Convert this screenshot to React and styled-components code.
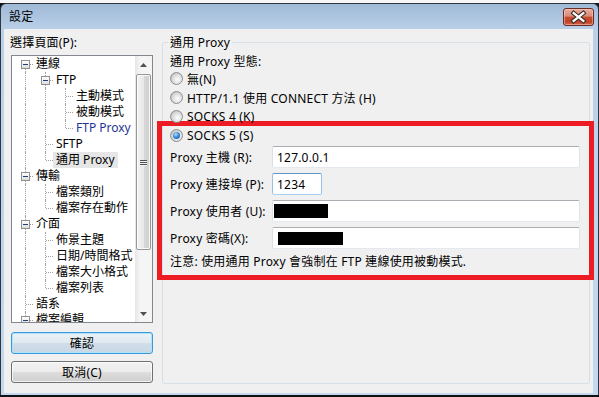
import styled, { createGlobalStyle } from 'styled-components';

const GlobalStyle = createGlobalStyle`
  html, body {
    margin: 0;
    padding: 0;
  }
  body {
    background: #0e1216;
    font-family: "Noto Sans", "Noto Sans CJK TC", sans-serif;
    font-size: 12px;
    letter-spacing: 0.2px;
    color: #000;
    overflow: hidden;
  }
`;

const TREE = [
  { guides: [], node: 'F', open: true, label: '連線' },
  { guides: ['I'], node: 'T', open: true, label: 'FTP' },
  { guides: ['I', 'I'], node: 'T', label: '主動模式' },
  { guides: ['I', 'I'], node: 'T', label: '被動模式' },
  { guides: ['I', 'I'], node: 'L', label: 'FTP Proxy', hot: true },
  { guides: ['I'], node: 'T', label: 'SFTP' },
  { guides: ['I'], node: 'L', label: '通用 Proxy', selected: true },
  { guides: [], node: 'T', open: true, label: '傳輸' },
  { guides: ['I'], node: 'T', label: '檔案類別' },
  { guides: ['I'], node: 'L', label: '檔案存在動作' },
  { guides: [], node: 'T', open: true, label: '介面' },
  { guides: ['I'], node: 'T', label: '佈景主題' },
  { guides: ['I'], node: 'T', label: '日期/時間格式' },
  { guides: ['I'], node: 'T', label: '檔案大小格式' },
  { guides: ['I'], node: 'L', label: '檔案列表' },
  { guides: [], node: 'T', label: '語系' },
  { guides: [], node: 'T', open: true, label: '檔案編輯' },
];

const PROXY_TYPES = [
  { label: '無(N)' },
  { label: 'HTTP/1.1 使用 CONNECT 方法 (H)' },
  { label: 'SOCKS 4 (K)' },
];

function App() {
  return (
    <>
      <GlobalStyle />
      <Screen>
        <Backdrop />
        <Window>
          <TitleBar>
            <Caption>設定</Caption>
            <CloseButton aria-label="close">
              <svg width="30" height="16" viewBox="0 0 30 16">
                <path d="M10 4 L20 12 M20 4 L10 12" stroke="#3b2a28" strokeWidth="4.6" strokeLinecap="square" fill="none" />
                <path d="M10 4 L20 12 M20 4 L10 12" stroke="#ffffff" strokeWidth="2.4" strokeLinecap="square" fill="none" />
              </svg>
            </CloseButton>
          </TitleBar>

          <Client>
            <LeftPane>
              <PaneLabel>選擇頁面(P):</PaneLabel>
              <TreeBox>
                <TreeList>
                  {TREE.map((item) => (
                    <TreeRow key={item.label}>
                      {item.guides.map((g, i) => (
                        <Guide key={i} $kind={g} />
                      ))}
                      <Guide $kind={item.node}>
                        {item.open && <Expander />}
                      </Guide>
                      <NodeLabel $selected={item.selected} $hot={item.hot}>
                        {item.label}
                      </NodeLabel>
                    </TreeRow>
                  ))}
                </TreeList>
                <ScrollBar>
                  <ArrowButton>
                    <svg width="7" height="4" viewBox="0 0 7 4">
                      <polygon points="3.5,0 7,4 0,4" fill="#505050" />
                    </svg>
                  </ArrowButton>
                  <Track>
                    <Thumb>
                      <Grip />
                      <Grip />
                      <Grip />
                    </Thumb>
                  </Track>
                  <ArrowButton>
                    <svg width="7" height="4" viewBox="0 0 7 4">
                      <polygon points="0,0 7,0 3.5,4" fill="#505050" />
                    </svg>
                  </ArrowButton>
                </ScrollBar>
              </TreeBox>
              <PushButton $default>確認</PushButton>
              <PushButton>取消(C)</PushButton>
            </LeftPane>

            <RightPane>
              <Group>
                <Legend>通用 Proxy</Legend>
                <TypeLabel>通用 Proxy 型態:</TypeLabel>
                {PROXY_TYPES.map((t) => (
                  <RadioRow key={t.label}>
                    <RadioDot />
                    <span>{t.label}</span>
                  </RadioRow>
                ))}
                <Highlight>
                  <RadioRow>
                    <RadioDot $checked />
                    <span>SOCKS 5 (S)</span>
                  </RadioRow>
                  <Fields>
                    <FieldRow>
                      <FieldLabel>Proxy 主機 (R):</FieldLabel>
                      <TextBox>127.0.0.1</TextBox>
                    </FieldRow>
                    <FieldRow>
                      <FieldLabel>Proxy 連接埠 (P):</FieldLabel>
                      <TextBox $width="50px" $focused>1234</TextBox>
                    </FieldRow>
                    <FieldRow>
                      <FieldLabel>Proxy 使用者 (U):</FieldLabel>
                      <TextBox $pad="1px">
                        <Redacted $w="54px" $h="14px" />
                      </TextBox>
                    </FieldRow>
                    <FieldRow>
                      <FieldLabel>Proxy 密碼(X):</FieldLabel>
                      <TextBox $pad="5px">
                        <Redacted $w="65px" $h="13px" />
                      </TextBox>
                    </FieldRow>
                  </Fields>
                  <Note>注意: 使用通用 Proxy 會強制在 FTP 連線使用被動模式.</Note>
                </Highlight>
              </Group>
            </RightPane>
          </Client>
        </Window>
      </Screen>
    </>
  );
}

export default App;

const Screen = styled.div`
  width: 599px;
  height: 397px;
  overflow: hidden;
  display: flex;
  flex-direction: column;
`;

const Backdrop = styled.div`
  flex: none;
  height: 3px;
  background: #f6f6f6;
`;

const Window = styled.div`
  flex: none;
  height: 392px;
  box-sizing: border-box;
  display: flex;
  flex-direction: column;
  border: 1px solid #2c3540;
  border-bottom: none;
  border-radius: 6px 6px 0 0;
  background: linear-gradient(#9fb9d6, #bad0e9 26px, #c4d8ee);
  padding: 0 5px 2px 3px;
`;

const TitleBar = styled.div`
  flex: none;
  height: 25px;
  display: flex;
  align-items: center;
  justify-content: space-between;
`;

const Caption = styled.span`
  padding-left: 5px;
  line-height: 15px;
`;

const CloseButton = styled.div`
  width: 31px;
  height: 18px;
  margin-right: -1px;
  box-sizing: border-box;
  border: 1px solid #6b2b22;
  border-radius: 3px;
  display: flex;
  align-items: center;
  justify-content: center;
  background: linear-gradient(#e8ab9c 0%, #dc8c78 45%, #c5502f 50%, #c04229 80%, #d2684c 100%);
  box-shadow: inset 0 0 0 1px rgba(255, 220, 210, 0.45);
`;

const Client = styled.div`
  flex: 1;
  display: flex;
  gap: 9px;
  padding: 6px 3px 0 7px;
  background: #f0f0f0;
`;

const LeftPane = styled.div`
  width: 142px;
  flex: none;
  display: flex;
  flex-direction: column;
`;

const PaneLabel = styled.div`
  line-height: 15px;
  margin-left: -1px;
`;

const TreeBox = styled.div`
  margin-top: 5px;
  height: 268px;
  box-sizing: border-box;
  border: 1px solid #828790;
  background: #fff;
  display: flex;
`;

const TreeList = styled.div`
  flex: 1;
  overflow: hidden;
  padding-left: 3px;
  letter-spacing: 0;
`;

const TreeRow = styled.div`
  height: 16px;
  flex: none;
  display: flex;
  white-space: nowrap;
`;

const Guide = styled.span`
  position: relative;
  flex: none;
  width: 20px;
  height: 16px;

  &::before {
    content: '';
    position: absolute;
    left: 10px;
    top: ${(p) => (p.$kind === 'F' ? '8px' : '0')};
    bottom: ${(p) => (p.$kind === 'L' ? '8px' : '0')};
    border-left: 1px dotted #a0a0a0;
  }

  &::after {
    content: '';
    display: ${(p) => (p.$kind === 'I' ? 'none' : 'block')};
    position: absolute;
    left: 11px;
    top: 8px;
    width: 7px;
    border-top: 1px dotted #a0a0a0;
  }
`;

const Expander = styled.span`
  position: absolute;
  z-index: 1;
  left: 6px;
  top: 4px;
  width: 9px;
  height: 9px;
  box-sizing: border-box;
  border: 1px solid #919191;
  background: linear-gradient(#ffffff, #dcdcdc);

  &::after {
    content: '';
    position: absolute;
    left: 1px;
    top: 3px;
    width: 5px;
    height: 1px;
    background: #1e3f78;
  }
`;

const NodeLabel = styled.span`
  margin-left: -2px;
  padding: 0 3px;
  line-height: 16px;
  color: ${(p) => (p.$hot ? '#1f3596' : '#000')};
  background: ${(p) => (p.$selected ? '#e6e6e6' : 'transparent')};
`;

const ScrollBar = styled.div`
  width: 17px;
  flex: none;
  display: flex;
  flex-direction: column;
  background: linear-gradient(90deg, #e6e6e6, #f5f5f5 30%, #f5f5f5);
`;

const ArrowButton = styled.div`
  height: 17px;
  flex: none;
  display: flex;
  align-items: center;
  justify-content: center;
`;

const Track = styled.div`
  flex: 1;
  padding: 1px 1px 0 1px;
`;

const Thumb = styled.div`
  height: 176px;
  box-sizing: border-box;
  border: 1px solid #979797;
  border-radius: 2px;
  background: linear-gradient(90deg, #f4f4f4, #e8e8e8 50%, #d7d7d7 55%, #cfcfcf);
  box-shadow: inset 0 0 0 1px rgba(255, 255, 255, 0.8);
  display: flex;
  flex-direction: column;
  align-items: center;
  justify-content: center;
  gap: 1px;
`;

const Grip = styled.span`
  width: 7px;
  height: 1px;
  background: #505050;
  box-shadow: 0 1px 0 #f0f0f0;
`;

const PushButton = styled.div`
  height: 22px;
  box-sizing: border-box;
  margin-top: ${(p) => (p.$default ? '9px' : '7px')};
  border-radius: 3px;
  border: 1px solid ${(p) => (p.$default ? '#3a9ad9' : '#707070')};
  background: ${(p) =>
    p.$default
      ? 'linear-gradient(#ebf2f7, #e0e9f0 50%, #d1dee9 50%, #c7d7e4)'
      : 'linear-gradient(#f2f2f2, #ebebeb 50%, #dddddd 50%, #cfcfcf)'};
  box-shadow: inset 0 0 0 1px ${(p) => (p.$default ? '#aee3f9' : 'rgba(255, 255, 255, 0.75)')};
  display: flex;
  align-items: center;
  justify-content: center;
  line-height: 15px;
`;

const RightPane = styled.div`
  flex: 1;
  min-width: 0;
`;

const Group = styled.fieldset`
  margin: 0;
  min-width: 0;
  height: 349px;
  box-sizing: border-box;
  padding: 0 9px 0 7px;
  border: 1px solid #d5dfe5;
  border-radius: 3px;
`;

const Legend = styled.legend`
  padding: 0 2px;
  margin-left: -2px;
  line-height: 15px;
`;

const TypeLabel = styled.div`
  margin-top: 4px;
  line-height: 15px;
`;

const RadioRow = styled.div`
  height: 19px;
  display: flex;
  align-items: center;
  gap: 4px;
  white-space: nowrap;
`;

const RadioDot = styled.span`
  flex: none;
  width: 13px;
  height: 13px;
  box-sizing: border-box;
  border-radius: 50%;
  border: 1px solid #8c8e90;
  background: radial-gradient(circle at 60% 60%, #fdfdfd 0, #f0f0f0 2px, #dadada 5px, #c6c6c6 7px);
  display: flex;
  align-items: center;
  justify-content: center;

  &::after {
    content: '';
    display: ${(p) => (p.$checked ? 'block' : 'none')};
    width: 7px;
    height: 7px;
    border-radius: 50%;
    background: radial-gradient(circle at 40% 35%, #b6e4ff 0, #3b8ad8 45%, #104e92 100%);
  }
`;

const Highlight = styled.div`
  margin: -5px -14px 0 -13px;
  padding: 0 9px 6px 8px;
  border: 5px solid #ed1c24;
`;

const Fields = styled.div`
  margin-top: 1px;
  display: flex;
  flex-direction: column;
  gap: 5px;
`;

const FieldRow = styled.div`
  display: flex;
  align-items: center;
  white-space: nowrap;
`;

const FieldLabel = styled.span`
  width: 102px;
  flex: none;
  line-height: 15px;
`;

const TextBox = styled.div`
  ${(p) => (p.$width ? `width: ${p.$width}; flex: none;` : 'flex: 1;')}
  height: 22px;
  box-sizing: border-box;
  border: 1px solid;
  border-radius: 2px;
  border-color: ${(p) =>
    p.$focused ? '#5d95c8 #99c2e8 #aad0f1 #99c2e8' : '#abadb3 #e2e3ea #e3e9ef #dbdfe6'};
  background: #fff;
  padding-left: ${(p) => p.$pad || '4px'};
  display: flex;
  align-items: center;
  line-height: 15px;
`;

const Redacted = styled.span`
  width: ${(p) => p.$w};
  height: ${(p) => p.$h};
  background: #000;
`;

const Note = styled.div`
  margin-top: 5px;
  line-height: 15px;
  white-space: nowrap;
`;
